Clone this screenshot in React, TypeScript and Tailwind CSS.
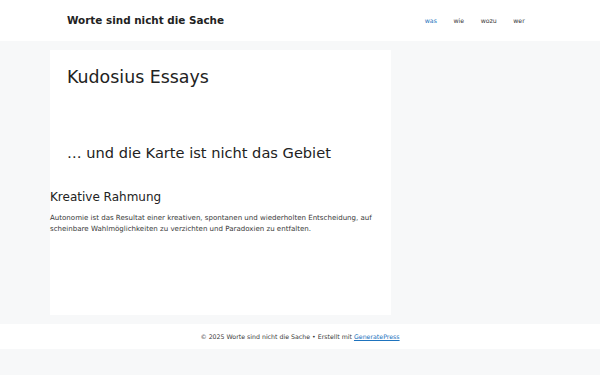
const font = { fontFamily: '"DejaVu Sans", sans-serif' };

export default function App() {
  const navItems = ["was", "wie", "wozu", "wer"];

  return (
    <div className="min-h-[375px] bg-[#f7f8f9] text-[#222222]" style={font}>
      {/* header */}
      <header className="bg-white h-[41px] flex items-center justify-between pl-[67px] pr-[67px]">
        <div className="text-[10.4px] font-bold text-[#222222]">Worte sind nicht die Sache</div>
        <nav className="flex items-center text-[6.2px] text-[#3a3a3a]">
          {navItems.map((item, i) => (
            <span key={item} className={"px-[8.3px] " + (i === 0 ? "text-[#1e73be]" : "")}>
              {item}
            </span>
          ))}
        </nav>
      </header>

      {/* content */}
      <main className="pt-[9px] pb-[9px] pl-[50px]">
        <article className="w-[341px] h-[265px] bg-white">
          <div className="pl-[17px] pt-[16px]">
            <h1 className="text-[17.4px] leading-[22px] text-[#222222]">Kudosius Essays</h1>
            <h2 className="mt-[55px] text-[14.6px] leading-[20px] text-[#222222]">
              … und die Karte ist nicht das Gebiet
            </h2>
          </div>
          <h3 className="mt-[26px] text-[12px] leading-[16px] text-[#222222]">Kreative Rahmung</h3>
          <p className="mt-[8px] text-[7.05px] leading-[10.8px] text-[#3a3a3a] pr-[10px]">
            Autonomie ist das Resultat einer kreativen, spontanen und wiederholten Entscheidung, auf
            scheinbare Wahlmöglichkeiten zu verzichten und Paradoxien zu entfalten.
          </p>
        </article>
      </main>

      {/* footer */}
      <footer className="bg-white h-[25px] flex items-center justify-center text-[6.25px] text-[#3a3a3a]">
        <span>
          © 2025 Worte sind nicht die Sache • Erstellt mit{" "}
          <a className="text-[#1e73be] underline">GeneratePress</a>
        </span>
      </footer>
    </div>
  );
}
